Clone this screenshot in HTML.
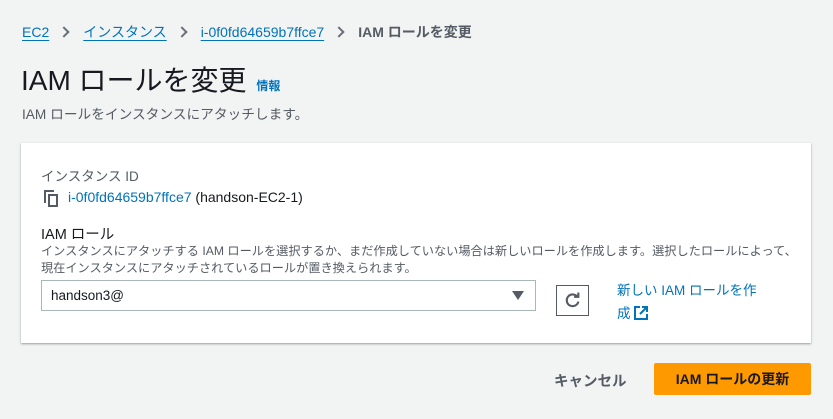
<!DOCTYPE html>
<html><head><meta charset="utf-8"><style>
*{margin:0;padding:0;box-sizing:border-box}
body{width:833px;height:419px;background:#f2f3f3;font-family:"Liberation Sans","Noto Sans CJK JP",sans-serif;color:#16191f;position:relative;overflow:hidden}
.a{position:absolute;white-space:nowrap}
.lnk{color:#0073bb}
.u{text-decoration:underline;text-underline-offset:3px}
.chev{display:inline-block;width:8px;height:8px;border-top:2px solid #687078;border-right:2px solid #687078;transform:rotate(45deg);margin:0 15px 1px 11px}
</style></head><body>
<div class="a" style="left:22px;top:22px;font-size:14px">
<span class="lnk u">EC2</span><span class="chev"></span><span class="lnk u">インスタンス</span><span class="chev"></span><span class="lnk u">i-0f0fd64659b7ffce7</span><span class="chev"></span><span style="color:#545b64;font-weight:bold">IAM ロールを変更</span>
</div>
<div class="a" style="left:21px;top:59px;font-size:28px">IAM ロールを変更 <span class="lnk" style="font-size:12px;font-weight:bold;margin-left:2px">情報</span></div>
<div class="a" style="left:22px;top:103px;font-size:13.7px;color:#545b64">IAM ロールをインスタンスにアタッチします。</div>
<div class="a" style="left:21px;top:143px;width:790px;height:200px;background:#fff;box-shadow:0 1px 2px rgba(0,28,36,.4)"></div>
<div class="a" style="left:41px;top:165px;font-size:13.5px;color:#545b64">インスタンス ID</div>
<svg class="a" style="left:44px;top:190px" width="14" height="17" viewBox="0 0 14 17"><path d="M1 13V1h9" fill="none" stroke="#545b64" stroke-width="2"/><rect x="5" y="5" width="8" height="11" fill="none" stroke="#545b64" stroke-width="2"/></svg>
<div class="a" style="left:68px;top:189px;font-size:14px"><span class="lnk">i-0f0fd64659b7ffce7</span> (handson-EC2-1)</div>
<div class="a" style="left:41px;top:223px;font-size:14.5px">IAM ロール</div>
<div class="a" style="left:41px;top:243px;font-size:12.2px;color:#545b64;line-height:17px">インスタンスにアタッチする IAM ロールを選択するか、まだ作成していない場合は新しいロールを作成します。選択したロールによって、<br>現在インスタンスにアタッチされているロールが置き換えられます。</div>
<div class="a" style="left:41px;top:280px;width:495px;height:31px;border:1px solid #aab7b8;background:#fff;font-size:13.5px;padding:7px 0 0 9px">handson3@</div>
<div class="a" style="left:512px;top:291px;width:0;height:0;border-left:6px solid transparent;border-right:6px solid transparent;border-top:9px solid #545b64"></div>
<div class="a" style="left:556px;top:285px;width:33px;height:31px;border:1px solid #545b64;background:#fff"></div>
<svg class="a" style="left:564px;top:292px" width="17" height="17" viewBox="0 0 16 16"><path d="M12.5 4.5A5.5 5.5 0 1 0 13.5 9" fill="none" stroke="#545b64" stroke-width="2"/><path d="M9.5 4.5h4v-4" fill="none" stroke="#545b64" stroke-width="2"/></svg>
<div class="a lnk" style="left:617px;top:279px;font-size:13.5px;line-height:23px">新しい IAM ロールを作<br>成 <svg width="14" height="14" viewBox="0 0 14 14" style="vertical-align:-2px"><path d="M6 1H1v12h12V8M8 1h5v5M13 1L6 8" fill="none" stroke="#0073bb" stroke-width="2"/></svg></div>
<div class="a" style="left:554px;top:370px;font-size:14.5px;font-weight:bold;color:#545b64">キャンセル</div>
<div class="a" style="left:654px;top:363px;width:157px;height:32px;background:#ff9900;border-radius:2px;font-size:14px;font-weight:bold;text-align:center;line-height:32px">IAM ロールの更新</div>
</body></html>
